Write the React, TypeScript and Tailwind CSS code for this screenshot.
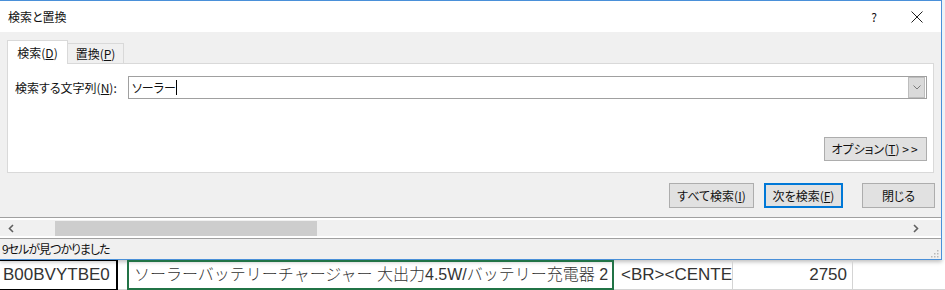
import { ReactNode } from "react";

const ui = "font-['Noto_Sans_CJK_JP',sans-serif] [font-feature-settings:'palt']";

function Btn({
  children,
  primary,
  className = "",
}: {
  children: ReactNode;
  primary?: boolean;
  className?: string;
}) {
  return (
    <div
      className={`flex items-center justify-center bg-[#e1e1e1] text-[12px] text-[#111] ${
        primary ? "border-2 border-[#0078d7]" : "border border-[#adadad]"
      } ${className}`}
    >
      {children}
    </div>
  );
}

function Chevron({ dir }: { dir: "left" | "right" }) {
  return (
    <svg width="6" height="9" viewBox="0 0 6 9">
      <path
        d={dir === "left" ? "M5 1 L1.5 4.5 L5 8" : "M1 1 L4.5 4.5 L1 8"}
        fill="none"
        stroke="#606060"
        strokeWidth="1.6"
      />
    </svg>
  );
}

export default function App() {
  return (
    <div className={`relative h-[290px] w-[945px] overflow-hidden bg-white ${ui}`}>
      <div className="flex h-[260px]">
        {/* dialog */}
        <div className="flex w-[942px] flex-col border-b border-r border-t border-[#4a90d9] shadow-[0_2px_4px_rgba(0,0,0,0.25)]">
          {/* title bar */}
          <div className="flex h-[31px] items-center bg-white pl-[8px] text-[12px] text-[#111]">
            <span>検索と置換</span>
            <span className="ml-auto mr-[34px] text-[12px]">?</span>
            <svg width="12" height="12" viewBox="0 0 12 12" className="mr-[18px]">
              <path d="M0.5 0.5 L11.5 11.5 M11.5 0.5 L0.5 11.5" stroke="#222" strokeWidth="1" />
            </svg>
          </div>

          {/* body */}
          <div className="flex flex-1 flex-col bg-[#f0f0f0]">
            <div className="flex items-end px-[7px] pt-[8px]">
              <div className="relative z-10 -mb-px flex h-[24px] w-[61px] items-center justify-center border border-b-0 border-[#d9d9d9] bg-white text-[12px] text-[#111]">
                検索(<span className="underline">D</span>)
              </div>
              <div className="flex h-[20px] w-[56px] items-center justify-center border border-l-0 border-b-0 border-[#d9d9d9] bg-[#f0f0f0] text-[12px] text-[#111]">
                置換(<span className="underline">P</span>)
              </div>
            </div>

            <div className="mx-[7px] flex h-[110px] w-[927px] flex-col border border-[#d9d9d9] bg-white">
              <div className="mt-[12px] flex items-center pl-[7px]">
                <span className="w-[113px] text-[12px] text-[#111]">
                  検索する文字列(<span className="underline">N</span>):
                </span>
                <div className="flex h-[23px] w-[799px] items-center border border-[#a0a0a0] bg-white">
                  <span className="pl-[3px] text-[12px] text-[#111]">ソーラー</span>
                  <span className="h-[15px] w-px bg-black" />
                  <div className="ml-auto mr-px flex h-[21px] w-[17px] items-center justify-center border border-[#bdbdbd] bg-[#dadada]">
                    <svg width="8" height="5" viewBox="0 0 8 5">
                      <path d="M0.5 0.5 L4 4 L7.5 0.5" fill="none" stroke="#7a7a7a" strokeWidth="1" />
                    </svg>
                  </div>
                </div>
              </div>
              <div className="mt-auto mb-[11px] mr-[6px] flex justify-end">
                <Btn className="h-[24px] w-[103px]">
                  オプション(<span className="underline">T</span>)&nbsp;<span className="tracking-[2px]">&gt;&gt;</span>
                </Btn>
              </div>
            </div>

            <div className="mt-[10px] flex justify-end pr-[6px]">
              <Btn className="h-[25px] w-[85px]">
                すべて検索(<span className="underline">I</span>)
              </Btn>
              <Btn primary className="ml-[10px] h-[25px] w-[79px]">
                次を検索(<span className="underline">F</span>)
              </Btn>
              <Btn className="ml-[19px] h-[25px] w-[73px]">閉じる</Btn>
            </div>

            {/* list scrollbar */}
            <div className="mt-[9px] flex h-[22px] flex-col border-y border-[#a0a0a0] bg-white">
              <div className="mt-[2px] flex h-[16px] items-center bg-[#f0f0f0]">
                <div className="flex w-[22px] justify-center">
                  <Chevron dir="left" />
                </div>
                <div className="ml-[33px] h-[15px] w-[262px] bg-[#cdcdcd]" />
                <div className="ml-auto mr-[14px] flex w-[22px] justify-center">
                  <Chevron dir="right" />
                </div>
              </div>
            </div>

            {/* status bar */}
            <div className="flex flex-1 items-center pl-[2px] text-[12px] text-[#111]">
              <span className="tracking-[-1px]">9セルが見つかりました</span>
              <svg width="8" height="8" viewBox="0 0 8 8" className="ml-auto mr-[2px] mt-[10px]">
                <g fill="#b8b8b8">
                  <rect x="6" y="0" width="1.5" height="1.5" />
                  <rect x="3" y="3" width="1.5" height="1.5" />
                  <rect x="6" y="3" width="1.5" height="1.5" />
                  <rect x="0" y="6" width="1.5" height="1.5" />
                  <rect x="3" y="6" width="1.5" height="1.5" />
                  <rect x="6" y="6" width="1.5" height="1.5" />
                </g>
              </svg>
            </div>
          </div>
        </div>
        <div className="flex-1 bg-[#eef2f6]" />
      </div>

      {/* spreadsheet row */}
      <div className="flex h-[30px] items-stretch font-['Liberation_Sans','Noto_Sans_CJK_JP',sans-serif] [font-feature-settings:normal]">
        <div className="flex w-[118px] items-center border-r-2 border-t border-b border-black pl-[3px] text-[17px] text-[#333]">
          B00BVYTBE0
        </div>
        <div className="w-[9px] border-b border-[#d4d4d4]" />
        <div className="flex w-[487px] items-center border-2 border-[#217346] pl-[5px] text-[16px] font-light text-[#333]">
          ソーラーバッテリーチャージャー 大出力4.5W/バッテリー充電器 2
        </div>
        <div className="flex w-[119px] items-center border-b border-r border-[#d4d4d4] pl-[7px] text-[17px] text-[#333]">
          &lt;BR&gt;&lt;CENTE
        </div>
        <div className="flex w-[120px] items-center justify-end border-b border-r border-[#d4d4d4] pr-[5px] text-[17px] text-[#333]">
          2750
        </div>
        <div className="flex-1 border-b border-[#d4d4d4]" />
      </div>
    </div>
  );
}
